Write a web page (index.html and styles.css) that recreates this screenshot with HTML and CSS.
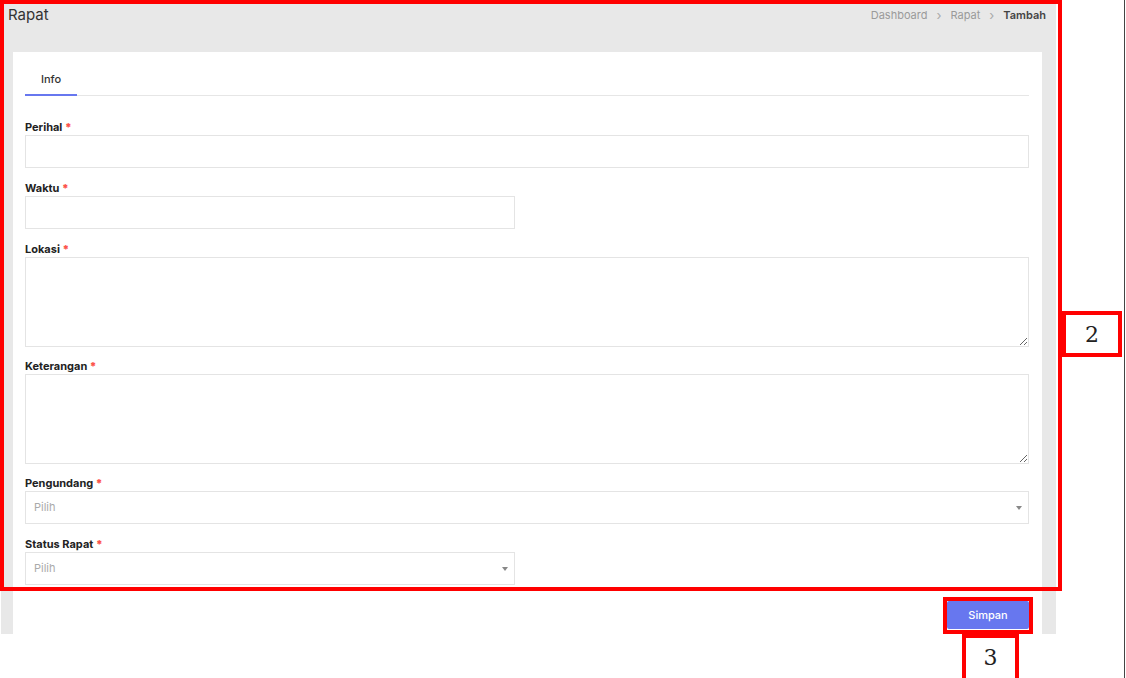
FILE: index.html
```html
<!DOCTYPE html>
<html lang="id">
<head>
	<meta charset="UTF-8">
	<title>Rapat - Tambah</title>
	<link rel="stylesheet" href="styles.css">
</head>
<body>
	<div class="page">
		<div class="app">
			<div class="topbar">
				<h1 class="title">Rapat</h1>
				<div class="crumbs">
					<span class="crumb">Dashboard</span>
					<span class="sep">›</span>
					<span class="crumb">Rapat</span>
					<span class="sep">›</span>
					<span class="crumb active">Tambah</span>
				</div>
			</div>
			<div class="card">
				<div class="tabs">
					<span class="tab active">Info</span>
				</div>
				<form class="form">
					<div class="field">
						<label>Perihal <b>*</b></label>
						<input type="text" class="ctl">
					</div>
					<div class="field half">
						<label>Waktu <b>*</b></label>
						<input type="text" class="ctl">
					</div>
					<div class="field tall">
						<label>Lokasi <b>*</b></label>
						<textarea class="ctl area"></textarea>
					</div>
					<div class="field tall">
						<label>Keterangan <b>*</b></label>
						<textarea class="ctl area"></textarea>
					</div>
					<div class="field">
						<label>Pengundang <b>*</b></label>
						<div class="ctl select">Pilih<span class="caret"></span></div>
					</div>
					<div class="field half">
						<label>Status Rapat <b>*</b></label>
						<div class="ctl select">Pilih<span class="caret"></span></div>
					</div>
					<div class="actions">
						<button type="button" class="btn">Simpan</button>
					</div>
				</form>
			</div>
		</div>

		<!-- annotation marks over the screenshot -->
		<div class="mark mark-main"></div>
		<div class="mark mark-btn"></div>
		<div class="mark mark-num mark-2">2</div>
		<div class="mark mark-num mark-3">3</div>
		<div class="edge"></div>
	</div>
</body>
</html>
```

FILE: styles.css
```css
html,body{
	margin: 0;
	background: #fff;
}
.page{
	position: relative;
	width: 1126px;
	height: 678px;
	overflow: hidden;
	font-family: Inter, "Liberation Sans", sans-serif;
	color: #333;
}
	.app{
		margin-left: 1px;
		width: 1055px;
		height: 634px;
		background: #e8e8e8;
		overflow: hidden;
		display: flex;
		flex-direction: column;
	}
		.topbar{
			height: 52px;
			flex: none;
			display: flex;
			justify-content: space-between;
			padding: 5px 10px 0 7px;
			box-sizing: border-box;
		}
			.title{
				margin: 0;
				font: 400 15px/20px Inter, sans-serif;
				color: #333;
			}
			.crumbs{
				display: flex;
				gap: 9px;
				font: 11px/20px Inter, sans-serif;
				color: #9a9a9a;
			}
				.crumbs .sep{
					font-size: 13px;
					color: #aaa;
				}
				.crumbs .active{
					color: #444;
					font-weight: 600;
				}
		.card{
			flex: 1;
			margin: 0 14px 0 12px;
			background: #fff;
			padding: 12px 13px 0 12px;
		}
			.tabs{
				display: flex;
				border-bottom: 1px solid #e6e6e6;
			}
				.tab{
					padding: 8px 16px 7px;
					font: 500 11px/15px Inter, sans-serif;
					color: #333;
					margin-bottom: -1px;
				}
				.tab.active{
					border-bottom: 2px solid #6777ef;
				}
			.form{
				margin-top: 23px;
			}
				.field{
					margin-bottom: 12px;
				}
				.field.tall{
					margin-bottom: 11px;
				}
				.field.half{
					width: 490px;
				}
					.field label{
						display: block;
						font: 700 11px/16px Inter, sans-serif;
						color: #222;
					}
						.field label b{
							color: #fc544b;
						}
					.ctl{
						display: block;
						width: 100%;
						height: 33px;
						box-sizing: border-box;
						border: 1px solid #e4e4e4;
						background: #fff;
						margin: 0;
						font: 11px Inter, sans-serif;
					}
					.ctl.area{
						height: 90px;
						resize: vertical;
					}
					.ctl.select{
						position: relative;
						padding-left: 8px;
						line-height: 31px;
						color: #aaa;
					}
						.caret{
							position: absolute;
							right: 6px;
							top: 14px;
							border-left: 3px solid transparent;
							border-right: 3px solid transparent;
							border-top: 4px solid #888;
						}
				.actions{
					display: flex;
					justify-content: flex-end;
					margin-top: 16px;
				}
					.btn{
						width: 82px;
						height: 28px;
						border: 0;
						border-radius: 2px;
						background: #6777ef;
						color: #fff;
						font: 500 11px Inter, sans-serif;
					}

.mark{
	position: absolute;
	box-sizing: border-box;
	border: 4px solid #ff0000;
}
.mark-main{
	left: 0;
	top: 0;
	width: 1062px;
	height: 591px;
}
.mark-btn{
	left: 943px;
	top: 597px;
	width: 90px;
	height: 37px;
}
.mark-num{
	background: #fff;
	display: flex;
	align-items: center;
	justify-content: center;
	font: 22px "DejaVu Serif", "Liberation Serif", serif;
	color: #222;
}
.mark-2{
	left: 1062px;
	top: 311px;
	width: 60px;
	height: 46px;
}
.mark-3{
	left: 962px;
	top: 634px;
	width: 57px;
	height: 52px;
	padding-bottom: 6px;
}
.edge{
	position: absolute;
	left: 1124px;
	top: 0;
	width: 1px;
	height: 678px;
	background: #444;
}
```
